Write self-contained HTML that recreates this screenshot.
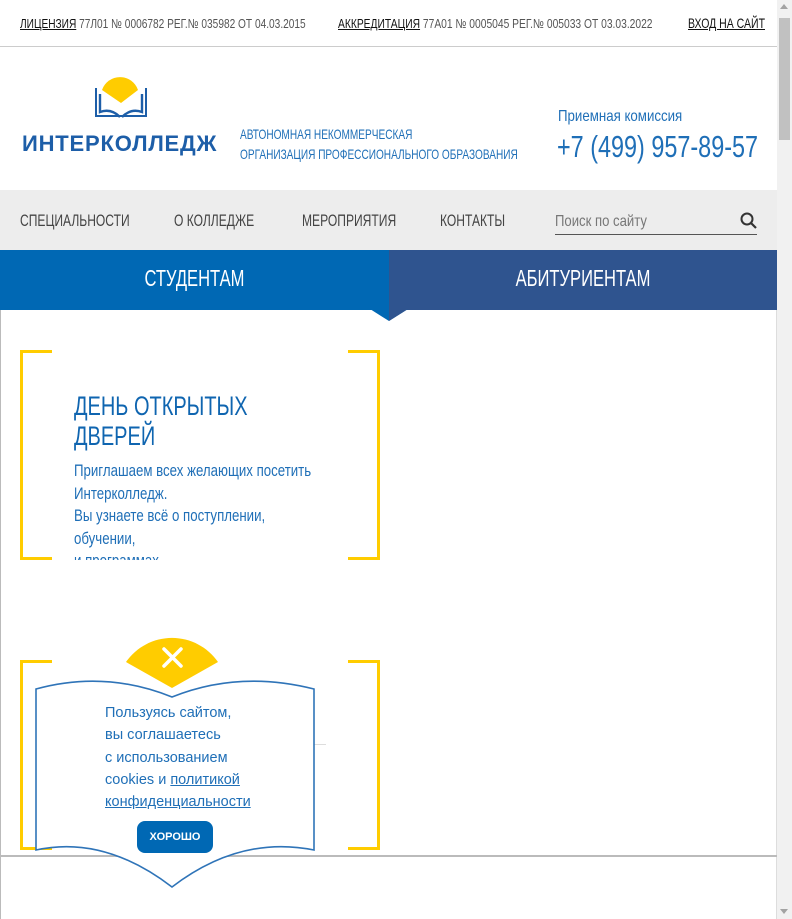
<!DOCTYPE html>
<html><head><meta charset="utf-8"><style>
*{margin:0;padding:0;box-sizing:border-box}
body{width:792px;height:919px;overflow:hidden;background:#fff;font-family:"Liberation Sans",sans-serif;position:relative}
.a{position:absolute;white-space:nowrap}
.n{transform:scaleX(.78);transform-origin:0 0}
u{text-decoration:underline}
</style></head><body>
<!-- scrollbar -->
<div class="a" style="left:777px;top:0;width:15px;height:919px;background:#f1f1f1"></div>
<div class="a" style="left:779px;top:18px;width:11px;height:122px;background:#c1c1c1"></div>
<div class="a" style="left:780px;top:4px;width:0;height:0;border-left:4px solid transparent;border-right:4px solid transparent;border-bottom:5px solid #a3a3a3"></div>
<div class="a" style="left:780px;top:909px;width:0;height:0;border-left:4px solid transparent;border-right:4px solid transparent;border-top:5px solid #a3a3a3"></div>

<!-- top bar -->
<div class="a n" style="left:20px;top:16px;font-size:13px;color:#555;transform:scaleX(.78)"><u style="color:#111">ЛИЦЕНЗИЯ</u> 77Л01 № 0006782 РЕГ.№ 035982 ОТ 04.03.2015</div>
<div class="a n" style="left:338px;top:16px;font-size:13px;color:#555;transform:scaleX(.79)"><u style="color:#111">АККРЕДИТАЦИЯ</u> 77А01 № 0005045 РЕГ.№ 005033 ОТ 03.03.2022</div>
<div class="a n" style="left:688px;top:15px;font-size:14px;color:#111;transform:scaleX(.75)"><u>ВХОД НА САЙТ</u></div>
<div class="a" style="left:0;top:46px;width:777px;height:1px;background:#ccc"></div>

<!-- logo -->
<svg class="a" style="left:94px;top:76px" width="54" height="44" viewBox="0 0 54 44">
<path d="M8 14 A19 19 0 0 1 44 14 L27 27 Z" fill="#ffcc00"/>
<path d="M2 12 V40 H52 V12" fill="none" stroke="#1d5ea8" stroke-width="2"/>
<path d="M6 18 V36 Q17 32 26 41 M48 18 V36 Q37 32 28 41" fill="none" stroke="#1d5ea8" stroke-width="2.4"/>
</svg>
<div class="a" style="left:22px;top:131px;font-size:22px;font-weight:bold;letter-spacing:0.8px;color:#1d5ea8">ИНТЕРКОЛЛЕДЖ</div>
<div class="a n" style="left:240px;top:124px;font-size:14px;color:#1f6fb7;line-height:20px;transform:scaleX(.72)">АВТОНОМНАЯ НЕКОММЕРЧЕСКАЯ<br>ОРГАНИЗАЦИЯ ПРОФЕССИОНАЛЬНОГО ОБРАЗОВАНИЯ</div>
<div class="a n" style="left:558px;top:108px;font-size:16px;color:#1f6fb7;transform:scaleX(.83)">Приемная комиссия</div>
<div class="a n" style="left:557px;top:129px;font-size:31px;color:#1f6fb7;transform:scaleX(.755)">+7 (499) 957-89-57</div>

<!-- nav -->
<div class="a" style="left:0;top:190px;width:777px;height:60px;background:#ededed"></div>
<div class="a n" style="left:20px;top:211px;font-size:17px;color:#444;transform:scaleX(.71)">СПЕЦИАЛЬНОСТИ</div>
<div class="a n" style="left:174px;top:211px;font-size:17px;color:#444;transform:scaleX(.71)">О КОЛЛЕДЖЕ</div>
<div class="a n" style="left:302px;top:211px;font-size:17px;color:#444;transform:scaleX(.71)">МЕРОПРИЯТИЯ</div>
<div class="a n" style="left:440px;top:211px;font-size:17px;color:#444;transform:scaleX(.71)">КОНТАКТЫ</div>
<div class="a n" style="left:555px;top:213px;font-size:16px;color:#777;transform:scaleX(.82)">Поиск по сайту</div>
<div class="a" style="left:555px;top:234px;width:202px;height:1px;background:#555"></div>
<svg class="a" style="left:740px;top:212px" width="18" height="18"><circle cx="7" cy="7" r="5.5" fill="none" stroke="#333" stroke-width="2"/><path d="M11 11 L16 16" stroke="#333" stroke-width="2.2"/></svg>

<!-- tabs -->
<div class="a" style="left:0;top:250px;width:389px;height:60px;background:#0068b4"></div>
<div class="a" style="left:389px;top:250px;width:388px;height:60px;background:#2f548f"></div>
<div class="a" style="left:0;top:265px;width:389px;text-align:center;font-size:23px;color:#fff;transform:scaleX(.72)">СТУДЕНТАМ</div>
<div class="a" style="left:389px;top:265px;width:388px;text-align:center;font-size:23px;color:#fff;transform:scaleX(.72)">АБИТУРИЕНТАМ</div>
<svg class="a" style="left:370px;top:309px" width="40" height="14"><path d="M0 1 Q12 1 19 11 Q26 1 38 1 Z" fill="#fff"/><path d="M0 0 H38 L19 12 Z" fill="#0068b4"/><path d="M19 0 H38 L19 12 Z" fill="#2f548f"/></svg>

<!-- content frame -->
<div class="a" style="left:0;top:310px;width:1px;height:609px;background:#bbb"></div>
<div class="a" style="left:776px;top:310px;width:1px;height:609px;background:#ddd"></div>
<div class="a" style="left:0;top:855px;width:777px;height:2px;background:#bbb"></div>

<!-- card 1 -->
<div class="a" style="left:20px;top:350px;width:32px;height:210px;border:3px solid #ffcc00;border-right:none"></div>
<div class="a" style="left:348px;top:350px;width:32px;height:210px;border:3px solid #ffcc00;border-left:none"></div>
<div class="a n" style="left:74px;top:391px;font-size:27px;color:#0f65b0;line-height:30px;transform:scaleX(.74)">ДЕНЬ ОТКРЫТЫХ<br>ДВЕРЕЙ</div>
<div class="a" style="left:74px;top:460px;width:280px;height:100px;overflow:hidden">
<div class="n" style="font-size:17px;color:#1f6fb7;line-height:22.5px;white-space:nowrap">Приглашаем всех желающих посетить<br>Интерколледж.<br>Вы узнаете всё о поступлении,<br>обучении,<br>и программах</div></div>

<!-- card 2 -->
<div class="a" style="left:20px;top:660px;width:32px;height:190px;border:3px solid #ffcc00;border-right:none"></div>
<div class="a" style="left:348px;top:660px;width:32px;height:190px;border:3px solid #ffcc00;border-left:none"></div>
<div class="a" style="left:300px;top:744px;width:26px;height:1px;background:#ddd"></div>

<!-- cookie popup -->
<svg class="a" style="left:30px;top:630px" width="292" height="262" viewBox="0 0 292 262">
<path d="M96 32 A56 56 0 0 1 188 32 L142 58 Z" fill="#ffcc00"/>
<path d="M134 19 L151 36 M151 19 L134 36" stroke="#fff" stroke-width="3.5" stroke-linecap="round"/>
<path d="M6 59 Q75 40 142 67 Q209 40 284 59 L284 220 Q210 205 142 257 Q74 205 6 220 Z" fill="#fff" stroke="#2f74b8" stroke-width="1.6"/>
</svg>
<div class="a" style="left:105px;top:702px;color:#1f6fb7;line-height:22.3px;font-size:14.5px">Пользуясь сайтом,<br>вы соглашаетесь<br>с использованием<br>cookies и <u>политикой</u><br><u>конфиденциальности</u></div>
<div class="a" style="left:137px;top:821px;width:76px;height:32px;background:#0068b4;border-radius:8px;color:#fff;font-size:11px;font-weight:bold;text-align:center;line-height:32px">ХОРОШО</div>
</body></html>
